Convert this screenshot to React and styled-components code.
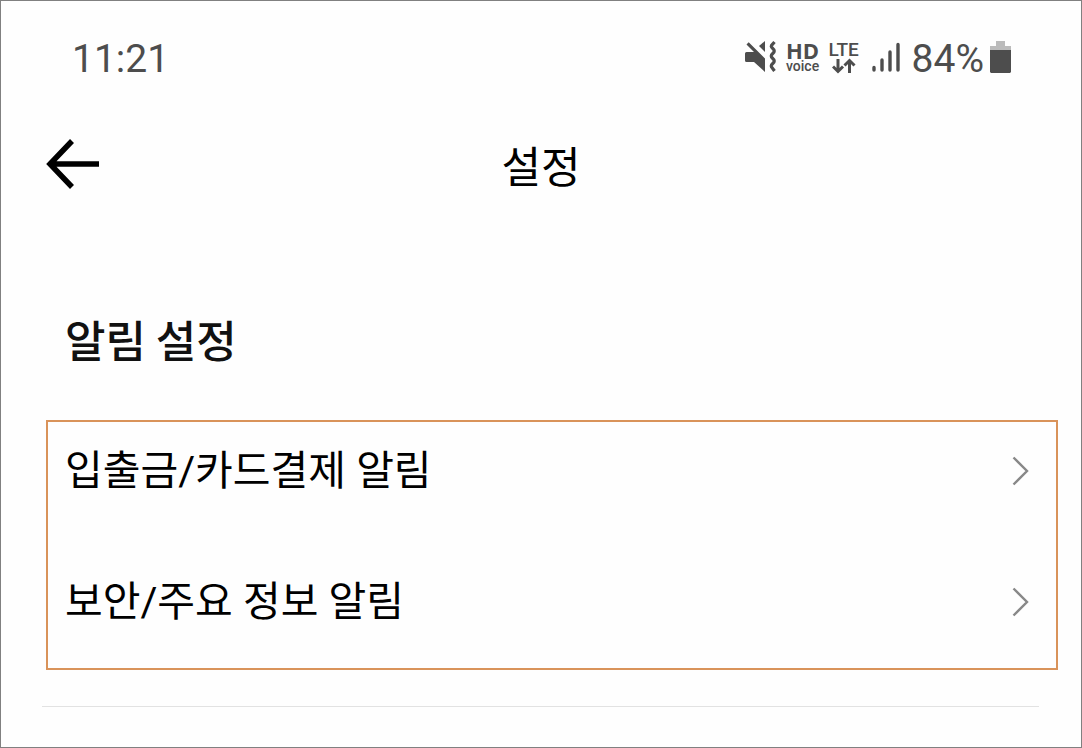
import React from 'react'
import styled, { createGlobalStyle } from 'styled-components'

const GlobalStyle = createGlobalStyle`
  * {
    box-sizing: border-box;
  }
  body {
    margin: 0;
    background: #fefefe;
    color: #000;
    font-family: 'Noto Sans CJK KR', sans-serif;
  }
`

const Screen = styled.div`
  min-height: 100vh;
  border: 1px solid #808080;
`

const StatusBar = styled.div`
  display: flex;
  align-items: center;
  justify-content: space-between;
  height: 88px;
  padding: 28px 69px 0 71px;
  color: #4d4d4d;
  font-family: Roboto, sans-serif;
  font-size: 39px;
  line-height: 60px;
`

const StatusIcons = styled.div`
  display: flex;
  align-items: center;

  svg {
    flex: none;
  }
`

const Badge = styled.div`
  display: flex;
  flex-direction: column;
  align-items: center;
  width: ${props => props.width}px;
  height: 36px;
  margin-left: 8px;
`

const HdLabel = styled.span`
  font: bold 22px/18px 'Open Sans', sans-serif;
`

const VoiceLabel = styled.span`
  font: 500 14px/14px Roboto, sans-serif;
`

const LteLabel = styled.span`
  font: 500 19px/17px Roboto, sans-serif;
`

const MuteSvg = styled.svg`
  margin-bottom: 4px;
`

const SignalSvg = styled.svg`
  margin: 0 12px 4px;
`

const BatterySvg = styled.svg`
  margin: 0 0 4px 6px;
`

const Header = styled.header`
  display: grid;
  grid-template-columns: 56px 1fr 56px;
  align-items: center;
  height: 150px;
  padding: 0 44px;
`

const BackButton = styled.button`
  display: flex;
  padding: 0;
  border: 0;
  background: none;
  color: inherit;
  cursor: pointer;
`

const Title = styled.h1`
  margin: 0;
  font-size: 43px;
  font-weight: 400;
  line-height: 64px;
  text-align: center;
`

const SectionTitle = styled.h2`
  margin: 68px 64px 49px;
  color: #111;
  font-size: 44px;
  font-weight: 500;
  line-height: 64px;
`

const Menu = styled.nav`
  margin: 0 23px 36px 45px;
  border: 2px solid #d9935a;
`

const MenuLink = styled.a`
  display: flex;
  align-items: center;
  justify-content: space-between;
  padding: 18px 27px 51px 17px;
  color: inherit;
  font-family: Roboto, 'Noto Sans CJK KR', sans-serif;
  font-size: 41px;
  line-height: 62px;
  text-decoration: none;

  &:last-child {
    padding-bottom: 35px;
  }
`

const Divider = styled.hr`
  height: 1px;
  margin: 0 42px 0 41px;
  border: 0;
  background: #e2e2e2;
`

const MuteIcon = () => (
  <MuteSvg width="34" height="34" viewBox="0 0 34 34" fill="#4d4d4d" aria-hidden="true">
    <path d="M2.500 4.500L4.700 2.300L21 18.500V32L10 22H2.500Q1 22 1 20.500V13.500Q1 12 2.500 12H10Z" />
    <path d="M15 6L21 1V12Z" />
    <path
      d="M30.500 2L27.500 5.500Q27 6.500 27.500 7L30 10Q30.500 11 30 12L27.500 15Q27 16 27.500 17L30 20Q30.500 21 30 22L27.500 25Q27 26 27.500 27L30.500 31"
      fill="none"
      stroke="#4d4d4d"
      strokeWidth="3.200"
    />
  </MuteSvg>
)

const DataArrows = () => (
  <svg width="24" height="16" viewBox="0 0 24 16" aria-hidden="true">
    <path
      d="M6 1V13M1 8.500L6 13.500L11 8.500M17.500 15V3M12.500 7.500L17.500 2.500L22.500 7.500"
      fill="none"
      stroke="#4d4d4d"
      strokeWidth="3"
    />
  </svg>
)

const SignalIcon = () => (
  <SignalSvg width="28" height="32" viewBox="0 0 28 32" aria-hidden="true">
    <path
      d="M2 26.500V29M10 19V29M18 11V29M26 3.500V29"
      stroke="#4d4d4d"
      strokeWidth="3.400"
      strokeLinecap="round"
    />
  </SignalSvg>
)

const BatteryIcon = () => (
  <BatterySvg width="22" height="34" viewBox="0 0 22 34" aria-hidden="true">
    <path d="M6 1H15V6H21V10H0V6H6Z" fill="#bbb" />
    <path d="M0 10H21V32L20 33H1L0 32Z" fill="#4d4d4d" />
  </BatterySvg>
)

const Chevron = () => (
  <svg width="17" height="30" viewBox="0 0 17 30" aria-hidden="true">
    <path d="M1.500 1.500L15 15L1.500 28.500" fill="none" stroke="#888" strokeWidth="2.400" />
  </svg>
)

const items = [
  { id: 'payments', label: '입출금/카드결제 알림' },
  { id: 'security', label: '보안/주요 정보 알림' },
]

const App = () => (
  <Screen>
    <GlobalStyle />
    <StatusBar>
      <time>11:21</time>
      <StatusIcons>
        <MuteIcon />
        <Badge width={34}>
          <HdLabel>HD</HdLabel>
          <VoiceLabel>voice</VoiceLabel>
        </Badge>
        <Badge width={32}>
          <LteLabel>LTE</LteLabel>
          <DataArrows />
        </Badge>
        <SignalIcon />
        <span>84%</span>
        <BatteryIcon />
      </StatusIcons>
    </StatusBar>
    <Header>
      <BackButton type="button" aria-label="뒤로">
        <svg width="56" height="50" viewBox="0 0 56 50" aria-hidden="true">
          <path
            d="M27 2L5 25L27 48M5 25H54"
            fill="none"
            stroke="#000"
            strokeWidth="5.500"
          />
        </svg>
      </BackButton>
      <Title>설정</Title>
    </Header>
    <main>
      <SectionTitle>알림 설정</SectionTitle>
      <Menu>
        {items.map(({ id, label }) => (
          <MenuLink key={id} href={`#${id}`}>
            {label}
            <Chevron />
          </MenuLink>
        ))}
      </Menu>
      <Divider />
    </main>
  </Screen>
)

export default App
